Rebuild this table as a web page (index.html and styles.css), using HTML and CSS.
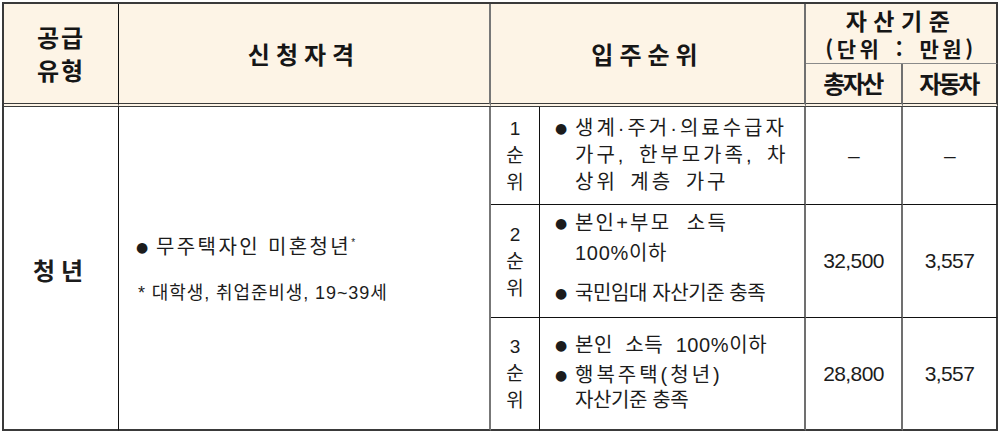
FILE: index.html
```html
<!DOCTYPE html>
<html lang="ko">
<head>
<meta charset="utf-8">
<title>공급유형 신청자격</title>
<link rel="stylesheet" href="styles.css">
</head>
<body>
<div class="sheet">
  <div class="cell head h-type"><span class="ttl-type">공급<br>유형</span></div>
  <div class="cell head h-qual"><span class="ttl-wide">신청자격</span></div>
  <div class="cell head h-rank"><span class="ttl-wide">입주순위</span></div>
  <div class="cell head h-asset">
    <span class="ttl-asset">자산기준</span>
    <span class="ttl-unit">(단위 : 만원)</span>
  </div>
  <div class="cell head h-total"><span class="ttl-narrow">총자산</span></div>
  <div class="cell head h-car"><span class="ttl-narrow">자동차</span></div>

  <div class="cell b-type"><span class="ttl-youth">청년</span></div>
  <div class="cell b-qual">
    <div class="qual-main"><span class="dot">●</span>무주택자인 미혼청년<sup class="star">*</sup></div>
    <div class="qual-note">* 대학생, 취업준비생, 19~39세</div>
  </div>

  <div class="cell rank r1">1<br>순<br>위</div>
  <div class="cell cond r1">
    <div class="item"><span class="dot">●</span><span class="txt"><span class="sp-a">생계·주거·의료수급자</span><br><span class="sp-b">가구, 한부모가족, 차</span><br><span class="sp-b">상위 계층 가구</span></span></div>
  </div>
  <div class="cell num r1 mid">–</div>
  <div class="cell num r1 last">–</div>

  <div class="cell rank r2">2<br>순<br>위</div>
  <div class="cell cond r2">
    <div class="item"><span class="dot">●</span><span class="txt"><span class="sp-c">본인+부모&nbsp;&nbsp;소득</span><br><span class="sp-d">100%이하</span></span></div>
    <div class="item"><span class="dot">●</span><span class="txt">국민임대 자산기준 충족</span></div>
  </div>
  <div class="cell num r2 mid">32,500</div>
  <div class="cell num r2 last">3,557</div>

  <div class="cell rank r3 end">3<br>순<br>위</div>
  <div class="cell cond r3 end">
    <div class="item"><span class="dot">●</span><span class="txt"><span class="sp-e">본인&nbsp;&nbsp;소득&nbsp;&nbsp;100%이하</span></span></div>
    <div class="item"><span class="dot">●</span><span class="txt"><span class="sp-f">행복주택(청년)</span><br>자산기준 충족</span></div>
  </div>
  <div class="cell num r3 mid end">28,800</div>
  <div class="cell num r3 last end">3,557</div>
</div>
</body>
</html>
```

FILE: styles.css
```css
* { box-sizing: border-box; }

body {
  margin: 0;
  padding: 2px 0 0 2px;
  background: #ffffff;
  font-family: "Liberation Sans", "Noto Sans CJK KR", sans-serif;
  color: #1c1c1c;
}

.sheet {
  display: grid;
  grid-template-columns: 115px 372px 49px 266px 97px 95px;
  grid-template-rows: 60px 43px 98px 113px 113px;
  width: 996px;
  border-left: 2px solid #3a3a3a;
  border-top: 2px solid #3a3a3a;
}

.cell {
  display: flex;
  flex-direction: column;
  justify-content: center;
  align-items: center;
  border-right: 1px solid #111;
}

.head {
  background: #fdf4e6;
  font-family: "Noto Sans CJK KR", sans-serif;
  font-weight: 700;
  color: #161616;
  border-bottom: 4px double #3c3c3c;
}

.h-type { grid-column: 1; grid-row: 1 / 3; }
.h-qual { grid-column: 2; grid-row: 1 / 3; border-right: 2px solid #777; }
.h-rank { grid-column: 3 / 5; grid-row: 1 / 3; border-right: 2px solid #707070; }
.h-asset {
  grid-column: 5 / 7; grid-row: 1;
  border-right: 2px solid #3a3a3a;
  border-bottom: 1px solid #8a8a8a;
  padding-top: 1px;
}
.h-total { grid-column: 5; grid-row: 2; border-right: 2px solid #707070; }
.h-car { grid-column: 6; grid-row: 2; border-right: 2px solid #3a3a3a; }

.ttl-type {
  display: block;
  font-size: 24px;
  line-height: 33px;
  letter-spacing: 2px;
  text-align: center;
  margin-top: -2px;
}
.ttl-wide {
  display: block;
  font-size: 24px;
  line-height: 30px;
  letter-spacing: 6px;
}
.ttl-asset {
  display: block;
  font-size: 23px;
  line-height: 27px;
  letter-spacing: 6.5px;
}
.ttl-unit {
  display: block;
  font-size: 21px;
  line-height: 28px;
  letter-spacing: 3.5px;
  word-spacing: 4px;
}
.ttl-narrow {
  display: block;
  font-size: 24px;
  line-height: 28px;
  letter-spacing: -2.5px;
  padding-right: 2px;
  margin-top: -2px;
}

.b-type {
  grid-column: 1; grid-row: 3 / 6;
  border-bottom: 2px solid #3a3a3a;
}
.ttl-youth {
  display: block;
  font-family: "Noto Sans CJK KR", sans-serif;
  font-weight: 700;
  font-size: 24px;
  line-height: 30px;
  letter-spacing: 6px;
  margin-top: 3px;
}

.b-qual {
  grid-column: 2; grid-row: 3 / 6;
  border-right: 2px solid #777;
  border-bottom: 2px solid #3a3a3a;
  align-items: flex-start;
  padding-left: 17px;
  padding-top: 2px;
}
.qual-main {
  font-size: 20px;
  letter-spacing: 2.4px;
  line-height: 26px;
  display: flex;
  align-items: center;
}
.star {
  font-size: 10px;
  vertical-align: top;
  position: relative;
  top: -4px;
  letter-spacing: 0;
}
.qual-note {
  margin-top: 21px;
  font-size: 18px;
  letter-spacing: 0.9px;
  line-height: 24px;
  padding-left: 2px;
}

.dot {
  display: inline-block;
  flex: none;
  width: 20px;
  font-family: "DejaVu Sans", sans-serif;
  font-size: 14px;
  line-height: 20px;
  letter-spacing: 0;
}

.rank {
  grid-column: 3;
  font-size: 19px;
  line-height: 27px;
  text-align: center;
  border-bottom: 1px solid #111;
}
.cond {
  grid-column: 4;
  border-right: 2px solid #707070;
  border-bottom: 1px solid #111;
  align-items: flex-start;
  padding-left: 15px;
  font-size: 20px;
  letter-spacing: -0.4px;
  line-height: 27px;
  gap: 10px;
}
.num {
  font-size: 21px;
  letter-spacing: -0.6px;
  border-bottom: 1px solid #111;
  color: #1c1c1c;
}
.mid { grid-column: 5; border-right: 2px solid #707070; }
.last { grid-column: 6; border-right: 2px solid #3a3a3a; }

.r1 { grid-row: 3; }
.r2 { grid-row: 4; }
.r3 { grid-row: 5; }
.end { border-bottom: 2px solid #3a3a3a; }

.item {
  display: flex;
  align-items: flex-start;
}
.item .dot { line-height: 27px; }
.txt { display: block; }

.cond.r2 { line-height: 30px; padding-bottom: 6px; }
.cond.r3 { line-height: 25px; gap: 5px; padding-bottom: 2px; }
.cond.r3 .dot { line-height: 25px; }
.cond.r2 .dot { line-height: 30px; }

.sp-a { letter-spacing: 3px; }
.sp-b { letter-spacing: 3px; word-spacing: 4px; }
.sp-c { letter-spacing: 2.2px; }
.sp-d { letter-spacing: 0.7px; }
.sp-e { letter-spacing: 0.6px; }
.sp-f { letter-spacing: 3px; }
```
